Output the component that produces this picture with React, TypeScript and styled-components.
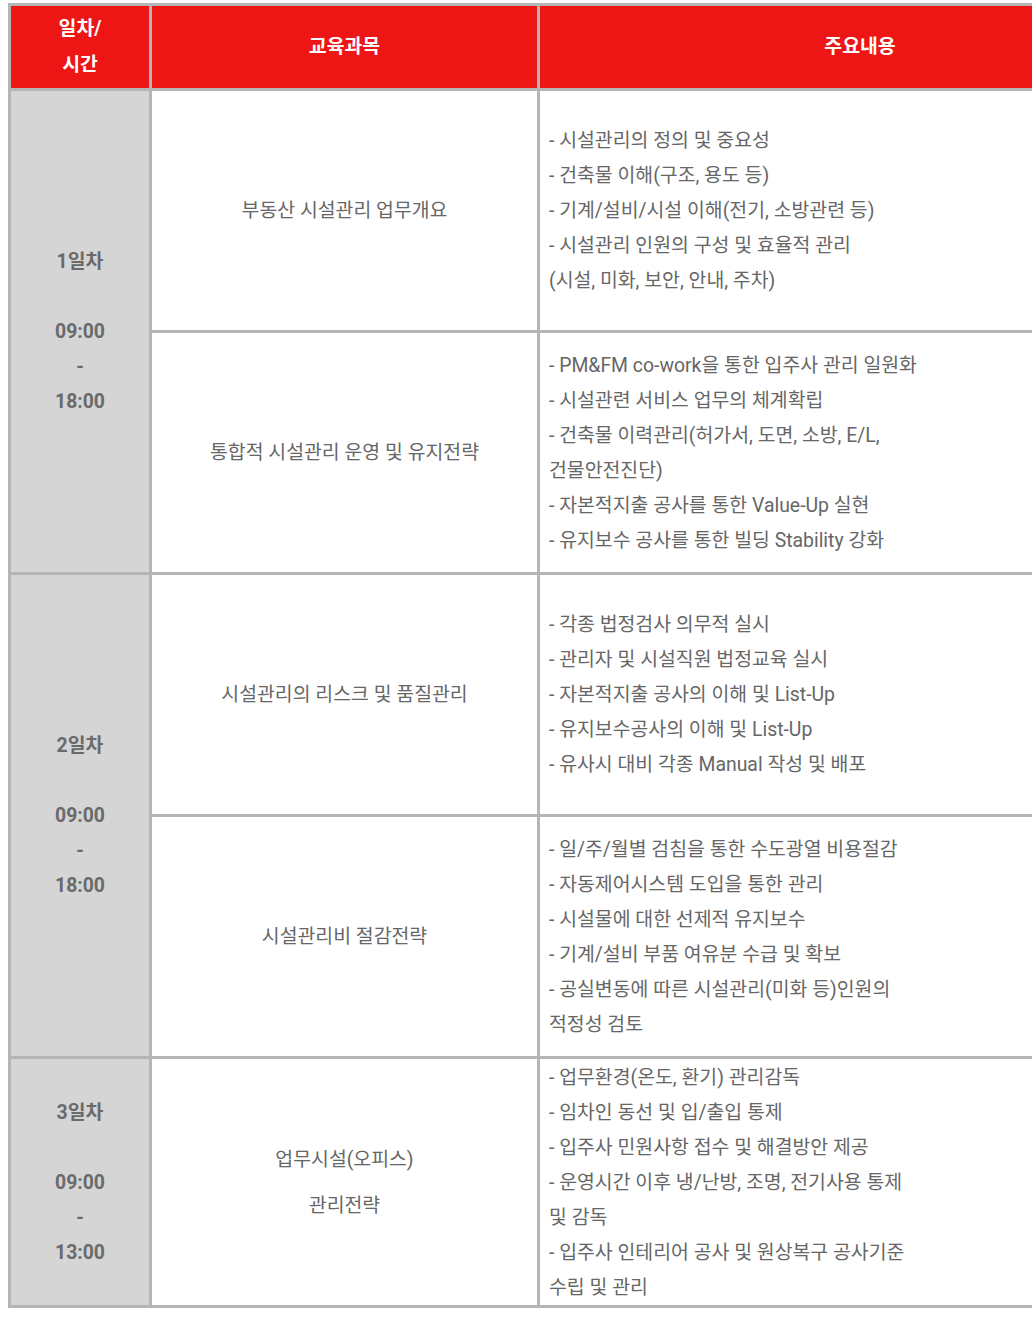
import React from "react";
import styled, { createGlobalStyle } from "styled-components";

const Global = createGlobalStyle`
  html, body {
    margin: 0;
    padding: 0;
    background: #ffffff;
    overflow: hidden;
  }
  body {
    font-family: Roboto, "Noto Sans CJK KR", "Noto Sans", sans-serif;
  }
`;

const Page = styled.div`
  padding: 3px 0 0 8px;
`;

const Grid = styled.div`
  display: grid;
  width: 1175px;
  grid-template-columns: 141px 388px 643px;
  grid-template-rows: 85px 242px 242px 242px 242px 249px;
  border-top: 3px solid #b5b5b5;
  border-left: 3px solid #b5b5b5;
`;

const Cell = styled.div`
  box-sizing: border-box;
  border-right: 3px solid #b5b5b5;
  border-bottom: 3px solid #b5b5b5;
  display: flex;
  flex-direction: column;
  font-size: 19.4px;
  line-height: 35px;
  color: #666666;
`;

const HeaderCell = styled(Cell)`
  background: #ee1515;
  color: #ffffff;
  font-weight: 700;
  font-size: 19.4px;
  line-height: 36px;
  align-items: center;
  justify-content: center;
  text-align: center;
`;

const DayCell = styled(Cell)<{ $span: number }>`
  grid-row: span ${(p) => p.$span};
  background: #d5d5d5;
  font-weight: 700;
  color: #6a6a6a;
  align-items: center;
  justify-content: center;
  text-align: center;
`;

const SubjectCell = styled(Cell)<{ $gap?: number }>`
  align-items: center;
  justify-content: center;
  text-align: center;
  gap: ${(p) => p.$gap ?? 0}px;
`;

const ContentCell = styled(Cell)`
  justify-content: center;
  padding-left: 9px;
  white-space: nowrap;
`;

const Line = styled.div`
  min-height: 35px;
`;

type Row = { subject: string[]; gap?: number; lines: string[] };
type Day = { label: string; end: string; rows: Row[] };

const days: Day[] = [
  {
    label: "1일차",
    end: "18:00",
    rows: [
      {
        subject: ["부동산 시설관리 업무개요"],
        lines: [
          "- 시설관리의 정의 및 중요성",
          "- 건축물 이해(구조, 용도 등)",
          "- 기계/설비/시설 이해(전기, 소방관련 등)",
          "- 시설관리 인원의 구성 및 효율적 관리",
          "(시설, 미화, 보안, 안내, 주차)",
        ],
      },
      {
        subject: ["통합적 시설관리 운영 및 유지전략"],
        lines: [
          "- PM&FM co-work을 통한 입주사 관리 일원화",
          "- 시설관련 서비스 업무의 체계확립",
          "- 건축물 이력관리(허가서, 도면, 소방, E/L,",
          "건물안전진단)",
          "- 자본적지출 공사를 통한 Value-Up 실현",
          "- 유지보수 공사를 통한 빌딩 Stability 강화",
        ],
      },
    ],
  },
  {
    label: "2일차",
    end: "18:00",
    rows: [
      {
        subject: ["시설관리의 리스크 및 품질관리"],
        lines: [
          "- 각종 법정검사 의무적 실시",
          "- 관리자 및 시설직원 법정교육 실시",
          "- 자본적지출 공사의 이해 및 List-Up",
          "- 유지보수공사의 이해 및 List-Up",
          "- 유사시 대비 각종 Manual 작성 및 배포",
        ],
      },
      {
        subject: ["시설관리비 절감전략"],
        lines: [
          "- 일/주/월별 검침을 통한 수도광열 비용절감",
          "- 자동제어시스템 도입을 통한 관리",
          "- 시설물에 대한 선제적 유지보수",
          "- 기계/설비 부품 여유분 수급 및 확보",
          "- 공실변동에 따른 시설관리(미화 등)인원의",
          "적정성 검토",
        ],
      },
    ],
  },
  {
    label: "3일차",
    end: "13:00",
    rows: [
      {
        subject: ["업무시설(오피스)", "관리전략"],
        gap: 11,
        lines: [
          "- 업무환경(온도, 환기) 관리감독",
          "- 임차인 동선 및 입/출입 통제",
          "- 입주사 민원사항 접수 및 해결방안 제공",
          "- 운영시간 이후 냉/난방, 조명, 전기사용 통제",
          "및 감독",
          "- 입주사 인테리어 공사 및 원상복구 공사기준",
          "수립 및 관리",
        ],
      },
    ],
  },
];

export default function App() {
  return (
    <Page>
      <Global />
      <Grid>
        <HeaderCell>
          <div>일차/</div>
          <div>시간</div>
        </HeaderCell>
        <HeaderCell>교육과목</HeaderCell>
        <HeaderCell>주요내용</HeaderCell>
        {days.map((d) => (
          <React.Fragment key={d.label}>
            <DayCell $span={d.rows.length} style={{ gridColumn: 1 }}>
              <Line>{d.label}</Line>
              <Line />
              <Line>09:00</Line>
              <Line>-</Line>
              <Line>{d.end}</Line>
            </DayCell>
            {d.rows.map((r, i) => (
              <React.Fragment key={i}>
                <SubjectCell $gap={r.gap} style={{ gridColumn: 2 }}>
                  {r.subject.map((s) => (
                    <Line key={s}>{s}</Line>
                  ))}
                </SubjectCell>
                <ContentCell style={{ gridColumn: 3 }}>
                  {r.lines.map((l) => (
                    <Line key={l}>{l}</Line>
                  ))}
                </ContentCell>
              </React.Fragment>
            ))}
          </React.Fragment>
        ))}
      </Grid>
    </Page>
  );
}
